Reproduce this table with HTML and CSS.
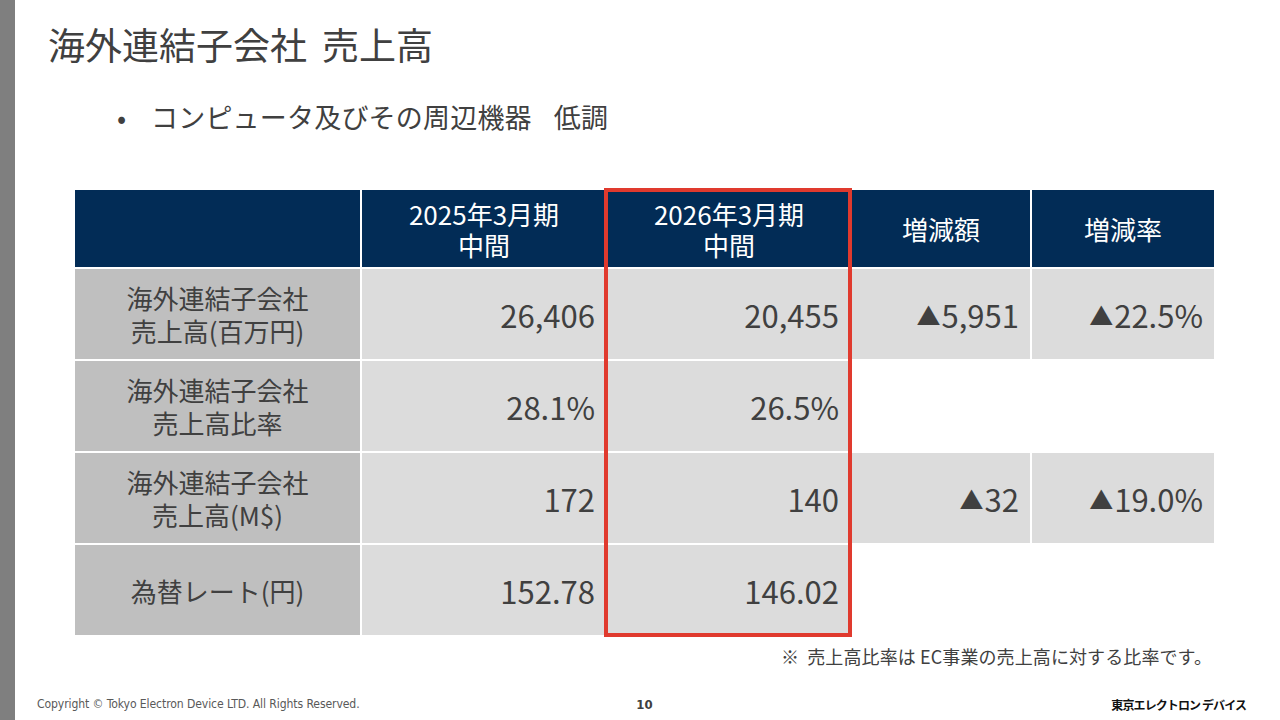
FILE: index.html
```html
<!DOCTYPE html>
<html lang="ja">
<head>
<meta charset="utf-8">
<title>海外連結子会社 売上高</title>
<link rel="stylesheet" href="styles.css">
</head>
<body>
<div class="page">
  <div class="sidebar"></div>
  <div class="main">
    <h1 class="title">海外連結子会社<span class="tgap"></span>売上高</h1>
    <ul class="bullets">
      <li>コンピュータ及びその周辺機器<span class="gap"></span>低調</li>
    </ul>
    <div class="table-wrap">
      <div class="table">
        <div class="th"></div>
        <div class="th"><span class="ln">2025年3月期</span><span class="ln">中間</span></div>
        <div class="th"><span class="ln">2026年3月期</span><span class="ln">中間</span></div>
        <div class="th">増減額</div>
        <div class="th">増減率</div>

        <div class="label"><span class="ln">海外連結子会社</span><span class="ln">売上高(百万円)</span></div>
        <div class="num">26,406</div>
        <div class="num">20,455</div>
        <div class="num"><span class="tri">▲</span>5,951</div>
        <div class="num"><span class="tri">▲</span>22.5%</div>

        <div class="label"><span class="ln">海外連結子会社</span><span class="ln">売上高比率</span></div>
        <div class="num">28.1%</div>
        <div class="num">26.5%</div>
        <div class="empty"></div>
        <div class="empty"></div>

        <div class="label"><span class="ln">海外連結子会社</span><span class="ln">売上高(M$)</span></div>
        <div class="num">172</div>
        <div class="num">140</div>
        <div class="num"><span class="tri">▲</span>32</div>
        <div class="num"><span class="tri">▲</span>19.0%</div>

        <div class="label">為替レート(円)</div>
        <div class="num">152.78</div>
        <div class="num">146.02</div>
        <div class="empty"></div>
        <div class="empty"></div>
      </div>
      <div class="highlight"></div>
    </div>
    <p class="note">※&nbsp;&nbsp;売上高比率は EC事業の売上高に対する比率です。</p>
    <footer class="footer">
      <span class="copyright">Copyright © Tokyo Electron Device LTD. All Rights Reserved.</span>
      <span class="pagenum">10</span>
      <span class="logo">東京エレクトロン デバイス</span>
    </footer>
  </div>
</div>
</body>
</html>
```

FILE: styles.css
```css
* { box-sizing: border-box; }
html, body {
  margin: 0;
  padding: 0;
  width: 1280px;
  height: 720px;
  overflow: hidden;
  background: #ffffff;
  font-family: "Noto Sans CJK JP", "Noto Sans", sans-serif;
  color: #404040;
}
.page {
  display: flex;
  width: 1280px;
  height: 720px;
}
.sidebar {
  width: 15px;
  flex: none;
  background: #7f7f7f;
}
.main {
  flex: 1;
  display: flex;
  flex-direction: column;
  position: relative;
}
.title {
  margin: 21px 0 0 33px;
  font-size: 37px;
  font-weight: 400;
  line-height: 46px;
  color: #404040;
}
.tgap {
  display: inline-block;
  width: 15px;
}
.bullets {
  margin: 30px 0 0 0;
  padding: 0 0 0 136px;
  font-size: 27px;
  line-height: 40px;
  list-style: none;
  letter-spacing: 0.2px;
}
.bullets li {
  position: relative;
}
.bullets li::before {
  content: "•";
  position: absolute;
  left: -34px;
  top: 0;
}
.gap {
  display: inline-block;
  width: 22px;
}
.table-wrap {
  position: relative;
  margin: 53px 0 0 60px;
  width: 1139px;
}
.table {
  display: grid;
  grid-template-columns: 285px 244px 242px 178px 182px;
  grid-template-rows: 77px 90px 90px 90px 90px;
  column-gap: 2px;
  row-gap: 2px;
}
.ln {
  display: block;
}
.th {
  background: #022c56;
  color: #ffffff;
  font-size: 26px;
  line-height: 31px;
  display: flex;
  flex-direction: column;
  align-items: center;
  justify-content: center;
  text-align: center;
}
.label {
  background: #bfbfbf;
  font-size: 26px;
  line-height: 33px;
  display: flex;
  flex-direction: column;
  align-items: center;
  justify-content: center;
  text-align: center;
}
.num {
  background: #dcdcdc;
  font-size: 31px;
  display: flex;
  align-items: center;
  justify-content: flex-end;
  padding-right: 11px;
}
.tri {
  font-size: 24px;
  margin-right: 1px;
}
.empty {
  background: #ffffff;
}
.highlight {
  position: absolute;
  left: 529px;
  top: -2px;
  width: 248px;
  height: 449px;
  border: 4px solid #e03a2e;
  pointer-events: none;
}
.note {
  margin: 8px 0 0 0;
  padding-right: 68px;
  text-align: right;
  font-size: 18px;
  line-height: 26px;
  letter-spacing: 0.1px;
}
.footer {
  margin-top: auto;
  height: 30px;
  display: grid;
  grid-template-columns: 1fr auto 1fr;
  align-items: center;
  padding: 0 34px 2px 22px;
}
.copyright {
  font-family: "DejaVu Sans Condensed", "DejaVu Sans", sans-serif;
  font-size: 12.1px;
  color: #595959;
  letter-spacing: -0.1px;
}
.pagenum {
  font-family: "DejaVu Sans Condensed", "DejaVu Sans", sans-serif;
  font-size: 13px;
  font-weight: 700;
  color: #404040;
  padding-left: 6px;
}
.logo {
  justify-self: end;
  font-size: 12px;
  font-weight: 700;
  color: #111111;
  letter-spacing: -0.9px;
}
```
